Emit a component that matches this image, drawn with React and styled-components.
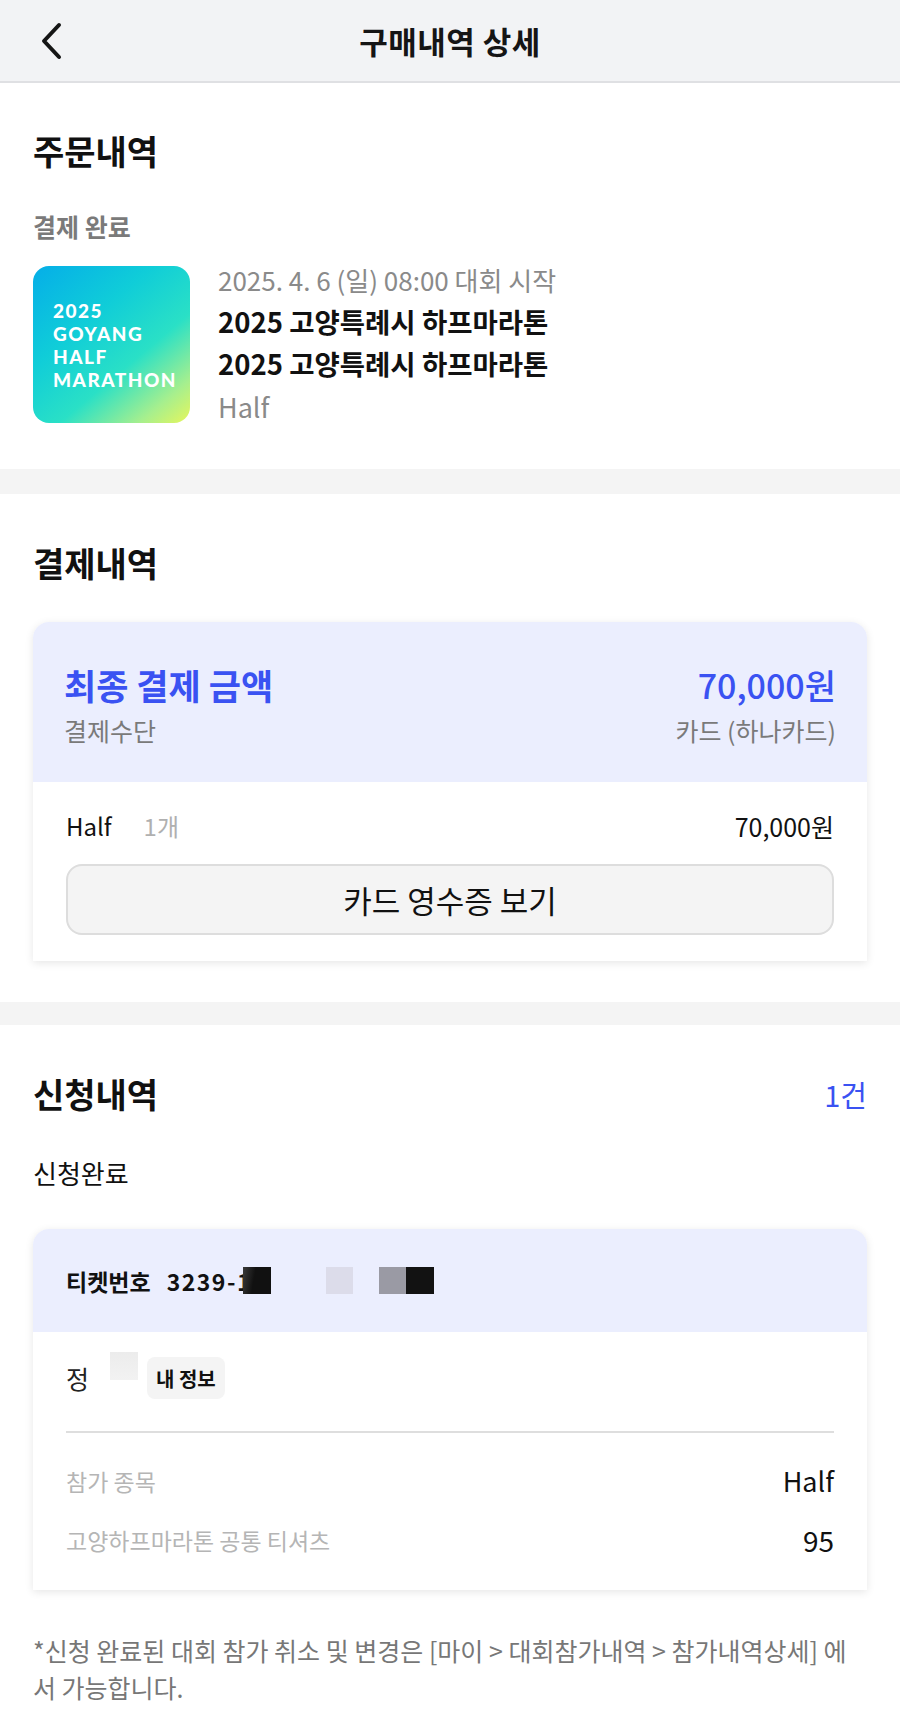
import styled, { createGlobalStyle } from "styled-components";

const GlobalStyle = createGlobalStyle`
  body {
    margin: 0;
    background: #ffffff;
    font-family: "Noto Sans CJK KR", "Noto Sans", sans-serif;
    color: #111111;
  }
`;

const StPage = styled.div`
  width: 900px;
  background: #ffffff;
`;

const StHeader = styled.header`
  height: 83px;
  display: grid;
  grid-template-columns: 90px 1fr 90px;
  align-items: center;
  background: #f2f3f5;
  border-bottom: 2px solid #dfe0e3;
  box-sizing: border-box;
`;

const StBackButton = styled.button`
  width: 60px;
  height: 60px;
  margin-left: 22px;
  padding: 0;
  border: none;
  background: none;
  display: flex;
  align-items: center;
  justify-content: center;
`;

const StHeaderTitle = styled.h1`
  margin: 0;
  text-align: center;
  font-size: 31px;
  font-weight: 700;
  letter-spacing: 0.5px;
  color: #151515;
`;

const StSection = styled.section`
  padding: ${(props) => props.$pad};
  background: #ffffff;
`;

const StBand = styled.div`
  height: ${(props) => props.$h}px;
  background: #f4f4f4;
`;

const StHeadRow = styled.div`
  display: flex;
  justify-content: space-between;
  align-items: center;
`;

const StHeading = styled.h2`
  margin: 0;
  font-size: 34px;
  line-height: 40px;
  font-weight: 700;
  color: #111111;
`;

const StCount = styled.span`
  font-size: 29px;
  line-height: 40px;
  color: #3a52f2;
`;

const StStatus = styled.div`
  margin-top: ${(props) => props.$mt}px;
  font-size: ${(props) => (props.$bold ? 25 : 26)}px;
  line-height: 30px;
  font-weight: ${(props) => (props.$bold ? 700 : 400)};
  color: ${(props) => (props.$bold ? "#7a7a7a" : "#111111")};
`;

const StProduct = styled.div`
  margin-top: 25px;
  display: flex;
  gap: 28px;
`;

const StThumb = styled.div`
  width: 157px;
  height: 157px;
  flex-shrink: 0;
  border-radius: 16px;
  background: linear-gradient(
    140deg,
    #05aee8 0%,
    #10cdd8 35%,
    #2ae0c6 62%,
    #a6ef8e 85%,
    #e6f65c 100%
  );
  display: flex;
  flex-direction: column;
  justify-content: center;
  padding-left: 20px;
  box-sizing: border-box;
`;

const StThumbText = styled.span`
  font-family: "Lato", "Liberation Sans", sans-serif;
  font-weight: 900;
  font-size: 19px;
  line-height: 23px;
  letter-spacing: 1.5px;
  color: #ffffff;
`;

const StProductInfo = styled.div`
  display: flex;
  flex-direction: column;
`;

const StDate = styled.div`
  font-size: 26px;
  line-height: 28px;
  color: #8a8a8a;
`;

const StProductTitle = styled.div`
  margin-top: 6px;
  font-size: 27.5px;
  line-height: 42px;
  font-weight: 700;
  color: #111111;
`;

const StProductType = styled.div`
  margin-top: 8px;
  font-size: 27px;
  line-height: 30px;
  color: #8a8a8a;
`;

const StCard = styled.div`
  margin-top: ${(props) => props.$mt}px;
  border-radius: 16px 16px 0 0;
  background: #ffffff;
  box-shadow: 0 2px 8px rgba(0, 0, 0, 0.1);
  overflow: hidden;
`;

const StCardTop = styled.div`
  background: #ebeefe;
  padding: ${(props) => props.$pad};
  min-height: ${(props) => props.$minH || 0}px;
  box-sizing: border-box;
  display: flex;
  flex-direction: column;
  justify-content: center;
`;

const StCardBody = styled.div`
  padding: ${(props) => props.$pad};
`;

const StRow = styled.div`
  display: flex;
  justify-content: space-between;
  align-items: center;
  margin-top: ${(props) => props.$mt || 0}px;
`;

const StTotalLabel = styled.span`
  font-size: 35px;
  line-height: 40px;
  font-weight: 700;
  color: #3a52f2;
`;

const StTotalValue = styled.span`
  font-size: 34px;
  line-height: 40px;
  font-weight: 500;
  color: #3a52f2;
`;

const StText = styled.span`
  font-size: ${(props) => props.$size || 25}px;
  line-height: 30px;
  color: ${(props) => props.$color || "#111111"};
`;

const StQty = styled.span`
  margin-left: 32px;
  color: #b0b0b0;
`;

const StReceiptButton = styled.button`
  width: 100%;
  height: 71px;
  margin-top: 23px;
  border: 2px solid #dddddd;
  border-radius: 16px;
  background: #f4f4f4;
  font-family: inherit;
  font-size: 31px;
  color: #111111;
`;

const StTicket = styled.div`
  display: flex;
  align-items: center;
  font-size: 23px;
  font-weight: 700;
  color: #111111;
`;

const StTicketNo = styled.span`
  margin-left: 16px;
  letter-spacing: 1.5px;
`;

const StMask = styled.span`
  display: inline-block;
  width: ${(props) => props.$w}px;
  height: 27px;
  margin-left: ${(props) => props.$ml}px;
  background: ${(props) => props.$bg};
`;

const StNameRow = styled.div`
  display: flex;
  align-items: center;
  height: 42px;
  font-size: 25px;
  color: #222222;
`;

const StNameMask = styled.span`
  width: 28px;
  height: 28px;
  margin: -24px 0 0 21px;
  background: linear-gradient(#ececec, #f2f2f2);
`;

const StTag = styled.span`
  margin-left: 9px;
  height: 42px;
  padding: 0 9px;
  display: flex;
  align-items: center;
  border-radius: 8px;
  background: #f4f4f4;
  font-size: 20px;
  font-weight: 700;
  color: #111111;
`;

const StDivider = styled.hr`
  margin: 32px 0 0;
  border: none;
  border-top: 2px solid #dedede;
`;

const StNotice = styled.p`
  margin: 42px 0 0;
  font-size: 25px;
  line-height: 37px;
  color: #777777;
`;

const ChevronLeft = () => (
  <svg width="26" height="38" viewBox="0 0 26 38" fill="none">
    <path
      d="M20 3 L5 19 L20 35"
      stroke="#151515"
      strokeWidth="4"
      strokeLinecap="round"
      strokeLinejoin="round"
    />
  </svg>
);

const App = () => {
  return (
    <>
      <GlobalStyle />
      <StPage>
        <StHeader>
          <StBackButton aria-label="뒤로">
            <ChevronLeft />
          </StBackButton>
          <StHeaderTitle>구매내역 상세</StHeaderTitle>
          <div />
        </StHeader>

        {/* 주문내역 */}
        <StSection $pad="48px 33px 46px">
          <StHeading>주문내역</StHeading>
          <StStatus $mt={40} $bold>
            결제 완료
          </StStatus>
          <StProduct>
            <StThumb>
              <StThumbText>2025</StThumbText>
              <StThumbText>GOYANG</StThumbText>
              <StThumbText>HALF</StThumbText>
              <StThumbText>MARATHON</StThumbText>
            </StThumb>
            <StProductInfo>
              <StDate>2025. 4. 6 (일) 08:00 대회 시작</StDate>
              <StProductTitle>
                2025 고양특례시 하프마라톤
                <br />
                2025 고양특례시 하프마라톤
              </StProductTitle>
              <StProductType>Half</StProductType>
            </StProductInfo>
          </StProduct>
        </StSection>

        <StBand $h={25} />

        {/* 결제내역 */}
        <StSection $pad="49px 33px 41px">
          <StHeading>결제내역</StHeading>
          <StCard $mt={39}>
            <StCardTop $pad="43px 31px 37px">
              <StRow>
                <StTotalLabel>최종 결제 금액</StTotalLabel>
                <StTotalValue>70,000원</StTotalValue>
              </StRow>
              <StRow $mt={10}>
                <StText $color="#7a7a7a">결제수단</StText>
                <StText $color="#7a7a7a">카드 (하나카드)</StText>
              </StRow>
            </StCardTop>
            <StCardBody $pad="29px 33px 26px">
              <StRow>
                <StText $size={24}>
                  Half<StQty>1개</StQty>
                </StText>
                <StText $size={25}>70,000원</StText>
              </StRow>
              <StReceiptButton>카드 영수증 보기</StReceiptButton>
            </StCardBody>
          </StCard>
        </StSection>

        <StBand $h={23} />

        {/* 신청내역 */}
        <StSection $pad="49px 33px 60px">
          <StHeadRow>
            <StHeading>신청내역</StHeading>
            <StCount>1건</StCount>
          </StHeadRow>
          <StStatus $mt={44}>신청완료</StStatus>
          <StCard $mt={41}>
            <StCardTop $pad="0 33px" $minH={103}>
              <StTicket>
                티켓번호
                <StTicketNo>3239-1</StTicketNo>
                <StMask
                  $w={28}
                  $ml={-9}
                  $bg="linear-gradient(100deg, #3a3a3a, #111 40%)"
                />
                <StMask $w={27} $ml={55} $bg="#dcdcea" />
                <StMask $w={27} $ml={26} $bg="#9a9aa4" />
                <StMask $w={28} $ml={0} $bg="#121212" />
              </StTicket>
            </StCardTop>
            <StCardBody $pad="25px 33px 35px">
              <StNameRow>
                정
                <StNameMask />
                <StTag>내 정보</StTag>
              </StNameRow>
              <StDivider />
              <StRow $mt={33}>
                <StText $size={23} $color="#b5b5b5">
                  참가 종목
                </StText>
                <StText $size={27}>Half</StText>
              </StRow>
              <StRow $mt={29}>
                <StText $size={23} $color="#b5b5b5">
                  고양하프마라톤 공통 티셔츠
                </StText>
                <StText $size={28}>95</StText>
              </StRow>
            </StCardBody>
          </StCard>
          <StNotice>
            *신청 완료된 대회 참가 취소 및 변경은 [마이 &gt; 대회참가내역 &gt;
            참가내역상세] 에서 가능합니다.
          </StNotice>
        </StSection>
      </StPage>
    </>
  );
};

export default App;
